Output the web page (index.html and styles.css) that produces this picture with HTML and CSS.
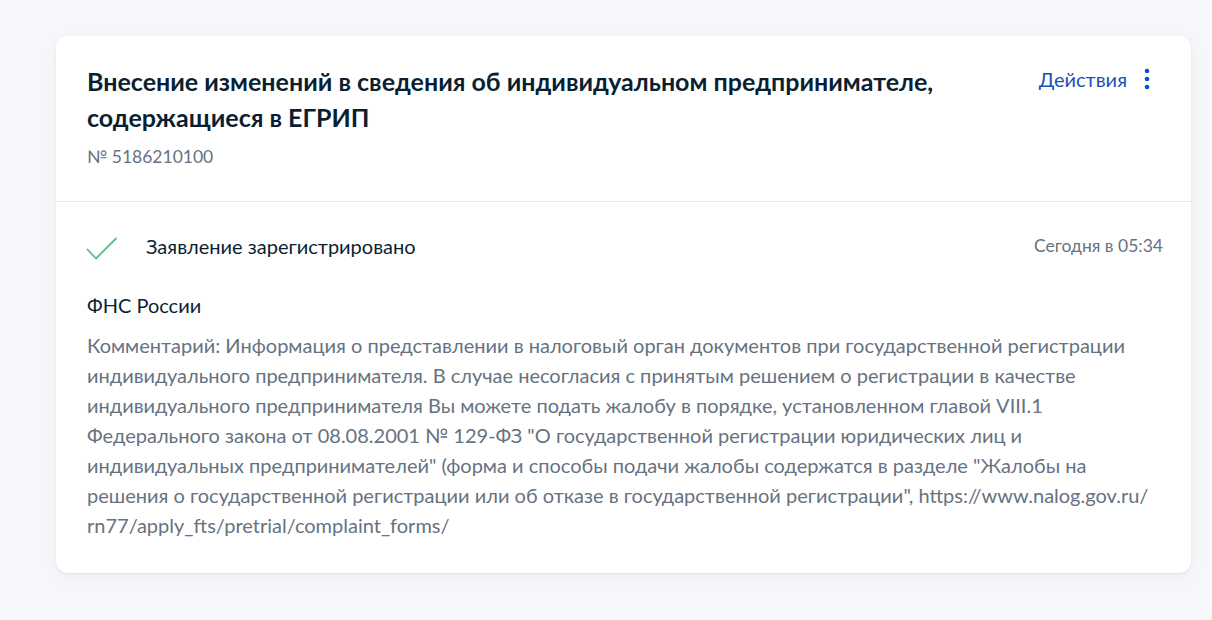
FILE: index.html
```html
<!DOCTYPE html>
<html lang="ru">
<head>
<meta charset="utf-8">
<link rel="stylesheet" href="styles.css">
</head>
<body>
<div class="page">
  <div class="card">
    <div class="card-head">
      <div class="head-main">
        <h1 class="title">Внесение изменений в сведения об индивидуальном предпринимателе, содержащиеся в ЕГРИП</h1>
        <div class="number">№ 5186210100</div>
      </div>
      <div class="actions">
        <span class="actions-label">Действия</span>
        <svg class="dots" width="8" height="24" viewBox="0 0 8 24"><circle cx="4" cy="4" r="2.3" fill="#0d4cd3"/><circle cx="4" cy="12" r="2.3" fill="#0d4cd3"/><circle cx="4" cy="20" r="2.3" fill="#0d4cd3"/></svg>
      </div>
    </div>
    <div class="card-body">
      <div class="status">
        <svg class="check" width="32" height="24" viewBox="0 0 32 24"><path d="M1.5 12.5 L10 21.5 L30 1.5" fill="none" stroke="#5cbf86" stroke-width="1.8" stroke-linecap="round" stroke-linejoin="round"/></svg>
        <span class="status-text">Заявление зарегистрировано</span>
        <span class="status-date">Сегодня в 05:34</span>
      </div>
      <div class="org">ФНС России</div>
      <p class="comment">Комментарий: Информация о представлении в налоговый орган документов при государственной регистрации индивидуального предпринимателя. В случае несогласия с принятым решением о регистрации в качестве индивидуального предпринимателя Вы можете подать жалобу в порядке, установленном главой VIII.1 Федерального закона от 08.08.2001 № 129-ФЗ "О государственной регистрации юридических лиц и индивидуальных предпринимателей" (форма и способы подачи жалобы содержатся в разделе "Жалобы на решения о государственной регистрации или об отказе в государственной регистрации", https://www.nalog.gov.ru/<wbr>rn77/apply_fts/pretrial/complaint_forms/</p>
    </div>
  </div>
</div>
</body>
</html>
```

FILE: styles.css
```css
* { box-sizing: border-box; }
html, body {
  margin: 0;
  padding: 0;
  background: #f5f7fb;
  font-family: Lato, "Noto Sans", sans-serif;
  color: #0b1f33;
}
.page {
  padding: 36px 21px 40px 56px;
}
.card {
  background: #ffffff;
  border-radius: 12px;
  box-shadow: 0 1px 2px rgba(11, 31, 51, 0.08), 0 4px 16px rgba(11, 31, 51, 0.04);
}
.card-head {
  display: flex;
  align-items: flex-start;
  gap: 40px;
  padding: 27px 32px 32px 31px;
  border-bottom: 1px solid #e3e8ee;
}
.head-main {
  flex: 1;
}
.title {
  margin: 0;
  font-size: 25px;
  line-height: 36px;
  font-weight: 700;
  color: #0b1f33;
}
.number {
  margin-top: 10px;
  font-size: 17.5px;
  line-height: 24px;
  color: #66727f;
}
.actions {
  display: flex;
  align-items: center;
  gap: 16px;
  padding-top: 4px;
  margin-right: 8px;
}
.actions-label {
  font-size: 20px;
  line-height: 24px;
  color: #1d4fb8;
}
.dots {
  display: block;
}
.card-body {
  padding: 32px 28px 33px 30px;
}
.status {
  display: flex;
  align-items: center;
  height: 24px;
}
.check {
  flex: none;
  margin-right: 28px;
  margin-top: 6px;
}
.status-text {
  flex: 1;
  font-size: 20px;
  line-height: 24px;
  color: #0b1f33;
}
.status-date {
  font-size: 17.5px;
  line-height: 24px;
  color: #66727f;
}
.org {
  margin-top: 35px;
  margin-left: 1px;
  font-size: 20px;
  line-height: 24px;
  color: #0b1f33;
}
.comment {
  margin: 13px 0 0 1px;
  font-size: 20px;
  line-height: 30px;
  color: #66727f;
}
```
